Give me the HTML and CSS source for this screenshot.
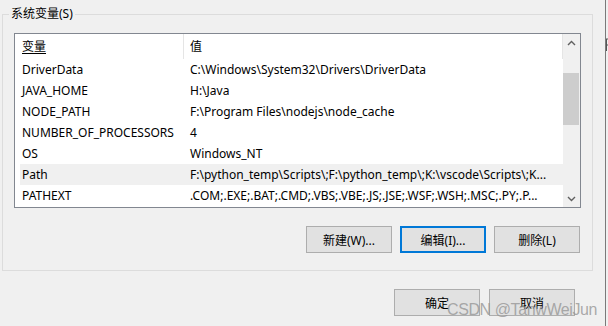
FILE: index.html
```html
<!DOCTYPE html>
<html lang="zh-CN">
<head>
    <meta charset="UTF-8">
    <title>环境变量</title>
    <link rel="stylesheet" href="styles.css">
</head>
<body>
    <div class="window">
        <div class="dialog">
            <div class="group">
                <div class="group-title">系统变量(S)</div>
                <div class="list">
                    <div class="list-body">
                        <div class="list-head">
                            <div class="cell name"><u>变量</u></div>
                            <div class="cell value">值</div>
                        </div>
                        <div class="row"><div class="cell name">DriverData</div><div class="cell value">C:\Windows\System32\Drivers\DriverData</div></div>
                        <div class="row"><div class="cell name">JAVA_HOME</div><div class="cell value">H:\Java</div></div>
                        <div class="row"><div class="cell name">NODE_PATH</div><div class="cell value">F:\Program Files\nodejs\node_cache</div></div>
                        <div class="row"><div class="cell name">NUMBER_OF_PROCESSORS</div><div class="cell value">4</div></div>
                        <div class="row"><div class="cell name">OS</div><div class="cell value">Windows_NT</div></div>
                        <div class="row selected"><div class="cell name">Path</div><div class="cell value">F:\python_temp\Scripts\;F:\python_temp\;K:\vscode\Scripts\;K...</div></div>
                        <div class="row"><div class="cell name">PATHEXT</div><div class="cell value">.COM;.EXE;.BAT;.CMD;.VBS;.VBE;.JS;.JSE;.WSF;.WSH;.MSC;.PY;.P...</div></div>
                    </div>
                    <div class="scrollbar">
                        <div class="arrow">
                            <svg width="9" height="6" viewBox="0 0 9 6"><path d="M1 5 L4.5 1.5 L8 5" fill="none" stroke="#606060" stroke-width="1.4"/></svg>
                        </div>
                        <div class="track"><div class="thumb"></div></div>
                        <div class="arrow">
                            <svg width="9" height="6" viewBox="0 0 9 6"><path d="M1 1 L4.5 4.5 L8 1" fill="none" stroke="#606060" stroke-width="1.4"/></svg>
                        </div>
                    </div>
                </div>
                <div class="actions">
                    <button class="btn">新建(W)...</button>
                    <button class="btn focus">编辑(I)...</button>
                    <button class="btn">删除(L)</button>
                </div>
            </div>
            <div class="footer">
                <button class="btn">确定</button>
                <button class="btn">取消</button>
            </div>
        </div>
        <div class="edge"></div>
        <div class="beyond">
            <svg width="2" height="14" viewBox="0 0 2 14"><path d="M0 1 H2 M0.5 1 V13 M0 7 H2" stroke="#555" stroke-width="1"/></svg>
        </div>
    </div>
    <div class="watermark">CSDN @TanwWeiJun</div>
</body>
</html>
```

FILE: styles.css
```css
body{
    margin: 0;
    width: 608px;
    height: 326px;
    overflow: hidden;
    background: #f0f0f0;
    font-family: "Noto Sans", "Noto Sans CJK SC", sans-serif;
    font-size: 12px;
    color: #000;
    position: relative;
}
.window{
    display: flex;
    height: 326px;
}
.dialog{
    width: 605px;
    padding: 14px 0 0 2px;
    box-sizing: border-box;
}
/* 그룹 박스 */
.group{
    width: 591px;
    height: 257px;
    border: 1px solid #dcdcdc;
    box-sizing: border-box;
}
.group-title{
    width: max-content;
    height: 16px;
    line-height: 16px;
    margin: -9px 0 0 6px;
    padding: 0 2px;
    background: #f0f0f0;
}
.list{
    display: flex;
    width: 567px;
    height: 175px;
    margin: 11px 0 0 11px;
    border: 1px solid #828790;
    box-sizing: border-box;
    background: #fff;
}
.list-body{
    width: 548px;
    overflow: hidden;
}
.list-head, .row{
    display: grid;
    grid-template-columns: 164px 1fr;
    margin-left: 5px;
    white-space: nowrap;
}
.list-head{
    height: 25px;
    line-height: 25px;
    border-right: 1px solid #e5e5e5;
}
.list-head .name{
    border-right: 1px solid #e5e5e5;
}
.list-head u{
    text-decoration-thickness: 1px;
    text-underline-offset: 2px;
}
.row{
    height: 21px;
    line-height: 21px;
}
.row.selected{
    background: #f0f0f0;
}
.cell{
    overflow: hidden;
}
.cell.name{
    padding-left: 2px;
}
.cell.value{
    padding-left: 6px;
}
/* 스크롤바 */
.scrollbar{
    width: 17px;
    display: flex;
    flex-direction: column;
    background: #f0f0f0;
}
.arrow{
    height: 17px;
    display: flex;
    align-items: center;
    justify-content: center;
}
.track{
    flex: 1;
    padding-top: 22px;
}
.thumb{
    height: 52px;
    margin: 0 1px 0 0;
    background: #cdcdcd;
}
/* 버튼 */
.actions, .footer{
    display: flex;
    justify-content: flex-end;
}
.actions{
    gap: 8px;
    margin-top: 18px;
    padding-right: 12px;
}
.footer{
    gap: 9px;
    margin-top: 18px;
    padding-right: 30px;
}
.btn{
    width: 86px;
    height: 27px;
    padding: 0;
    border: 1px solid #adadad;
    background: #e1e1e1;
    font-family: inherit;
    font-size: 12px;
    color: #000;
    box-sizing: border-box;
}
.btn.focus{
    border: 2px solid #0078d7;
}
.edge{
    width: 1px;
    background: #7a7a7a;
}
.beyond{
    width: 2px;
    padding-top: 38px;
}
.beyond svg{
    display: block;
}
.watermark{
    position: absolute;
    left: 447px;
    top: 300px;
    font-family: "Liberation Sans", Arial, sans-serif;
    font-size: 16px;
    line-height: 20px;
    color: rgba(150, 150, 150, 0.8);
    letter-spacing: -0.4px;
}
```
